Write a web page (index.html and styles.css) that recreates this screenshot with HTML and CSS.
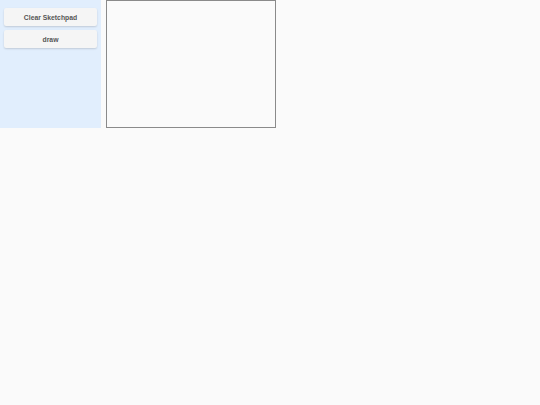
FILE: index.html
```html
<!DOCTYPE html>
<html>
<head>
<meta charset="utf-8">
<link rel="stylesheet" href="styles.css">
</head>
<body>
<div class="app">
  <div class="sidebar">
    <button class="btn">Clear Sketchpad</button>
    <button class="btn">draw</button>
  </div>
  <div class="pad"></div>
</div>
</body>
</html>
```
FILE: styles.css
```css
html, body {
  margin: 0;
  padding: 0;
  background: #fafafa;
  font-family: "Liberation Sans", Arial, sans-serif;
}
.app {
  display: flex;
  align-items: flex-start;
  gap: 5px;
}
.sidebar {
  width: 93px;
  height: 120px;
  padding: 8px 4px 0 4px;
  background: #e1eefd;
  display: flex;
  flex-direction: column;
  gap: 4px;
}
.btn {
  height: 18px;
  width: 93px;
  margin: 0;
  padding: 0;
  border: none;
  border-radius: 2px;
  background: #f5f5f5;
  box-shadow: 0 1px 2px rgba(0,0,0,0.15);
  font-family: "Liberation Sans", Arial, sans-serif;
  font-size: 6.8px;
  font-weight: bold;
  color: #555;
}
.pad {
  width: 168px;
  height: 126px;
  border: 1px solid #8a8a8a;
  background: #fafafa;
}
```
